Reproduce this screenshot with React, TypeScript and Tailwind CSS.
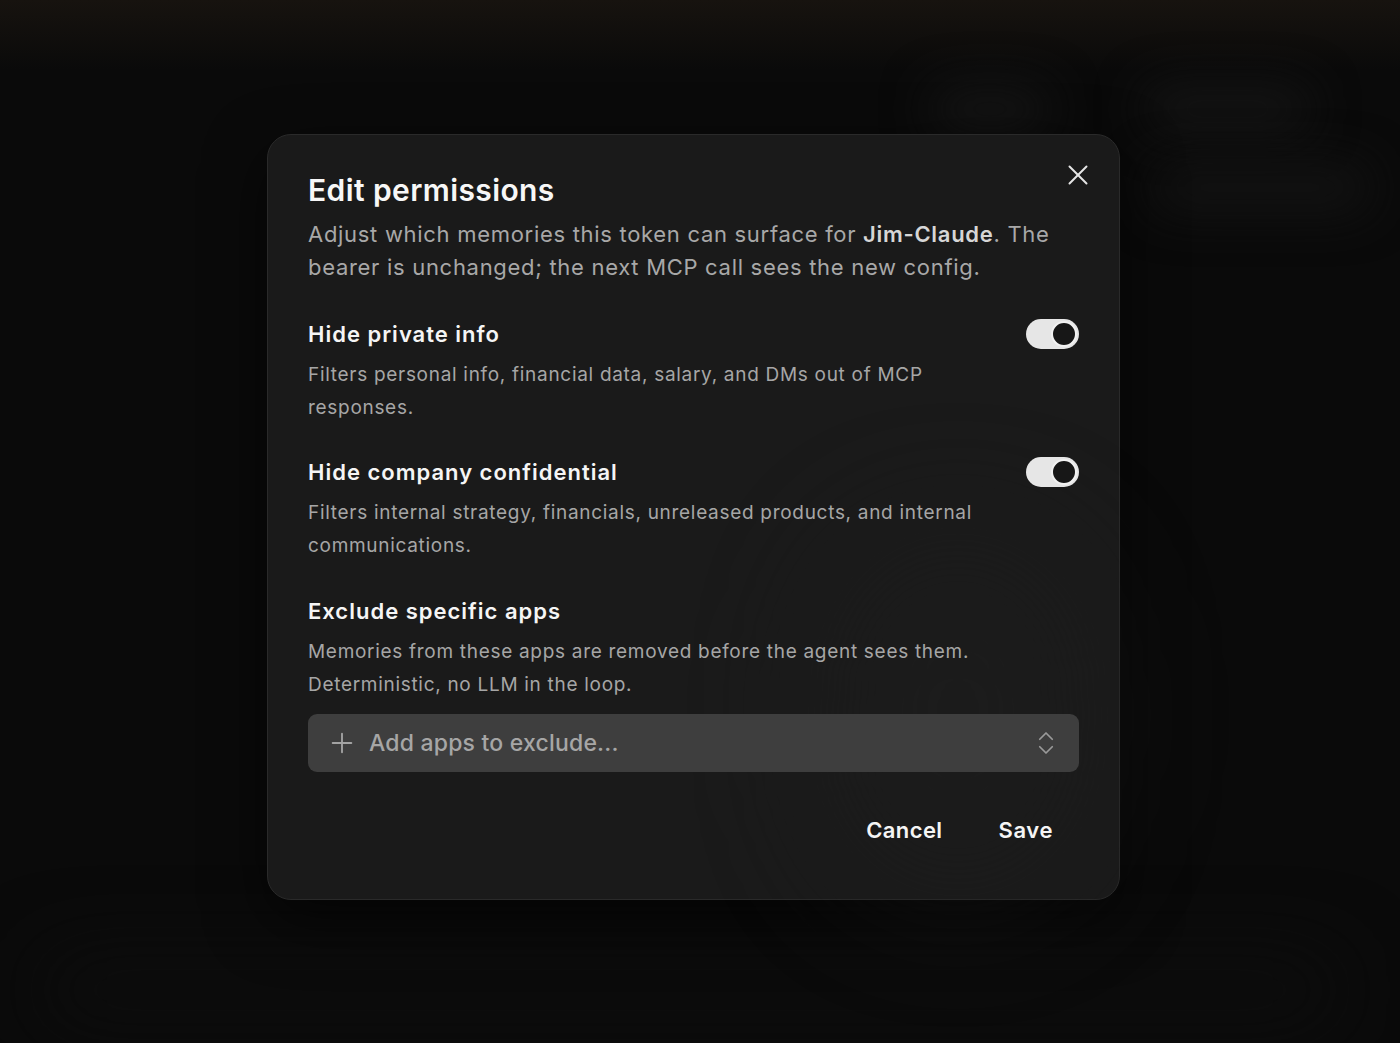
import { useState } from "react";
import { ChevronsUpDown, Plus, X } from "lucide-react";

function Toggle({ on, onChange }: { on: boolean; onChange: () => void }) {
  return (
    <button
      type="button"
      onClick={onChange}
      className={`flex h-[30px] w-[53px] shrink-0 items-center rounded-full p-[2px] ${
        on ? "justify-end bg-[#e6e6e6]" : "justify-start bg-[#3a3a3a]"
      }`}
    >
      <span className="h-[26px] w-[26px] rounded-full border-2 border-[#f2f2f2] bg-[#171717]" />
    </button>
  );
}

function Section({
  title,
  description,
  on,
  onChange,
}: {
  title: string;
  description: string;
  on?: boolean;
  onChange?: () => void;
}) {
  return (
    <div>
      <div className="flex items-center justify-between">
        <h3 className="text-[22px] leading-[30px] font-semibold tracking-[1px] text-[#f5f5f5]">{title}</h3>
        {onChange && <Toggle on={!!on} onChange={onChange} />}
      </div>
      <p className="mt-[9px] max-w-[690px] text-[19px] leading-[33px] tracking-[0.7px] text-[#a6a6a6]">
        {description}
      </p>
    </div>
  );
}

export default function App() {
  const [hidePrivate, setHidePrivate] = useState(true);
  const [hideCompany, setHideCompany] = useState(true);

  return (
    <div
      className="relative flex min-h-[1043px] justify-start overflow-hidden bg-[#0a0a0a] pl-[267px] pt-[134px]"
      style={{ fontFamily: "Inter, 'Noto Sans', sans-serif" }}
    >
      {/* dimmed backdrop content */}
      <div className="pointer-events-none absolute inset-x-0 top-0 h-[70px] bg-gradient-to-b from-[#17130f] to-transparent" />
      <div className="pointer-events-none absolute left-[930px] top-[88px] h-[42px] w-[120px] rounded-full bg-[#161616] blur-xl" />
      <div className="pointer-events-none absolute left-[1145px] top-[88px] h-[42px] w-[165px] rounded-full bg-[#151515] blur-xl" />
      <div className="pointer-events-none absolute left-[1150px] top-[165px] h-[45px] w-[220px] rounded-full bg-[#131313] blur-xl" />
      <div className="pointer-events-none absolute left-[40px] top-[960px] h-[60px] w-[1300px] rounded-full bg-[#0d0d0d] blur-2xl" />

      <div className="relative h-[766px] w-[853px] self-start rounded-[24px] border border-[#2a2a2a] bg-[#1a1a1a] px-[40px] pt-[37px] shadow-[0_20px_60px_rgba(0,0,0,0.6)]">
        <div className="pointer-events-none absolute left-[560px] top-[400px] h-[360px] w-[260px] rounded-full bg-[#1d1d1d] opacity-60 blur-3xl" />

        <button type="button" className="absolute left-[793px] top-[23px] text-[#e5e5e5]">
          <X className="h-[34px] w-[34px]" strokeWidth={1.4} />
        </button>

        <div className="relative">
          <h2 className="text-[30px] leading-[36px] font-semibold tracking-[0.4px] text-[#f7f7f7]">Edit permissions</h2>
          <p className="mt-[10px] text-[22px] leading-[33px] tracking-[0.7px] text-[#a8a8a8]">
            Adjust which memories this token can surface for{" "}
            <span className="font-semibold text-[#d6d6d6]">Jim-Claude</span>. The bearer is unchanged; the next MCP call
            sees the new config.
          </p>

          <div className="mt-[35px] flex flex-col gap-[33px]">
            <Section
              title="Hide private info"
              description="Filters personal info, financial data, salary, and DMs out of MCP responses."
              on={hidePrivate}
              onChange={() => setHidePrivate((v) => !v)}
            />
            <Section
              title="Hide company confidential"
              description="Filters internal strategy, financials, unreleased products, and internal communications."
              on={hideCompany}
              onChange={() => setHideCompany((v) => !v)}
            />
            <div className="pt-[1px]">
              <Section
                title="Exclude specific apps"
                description="Memories from these apps are removed before the agent sees them. Deterministic, no LLM in the loop."
              />
              <button
                type="button"
                className="mt-[13px] flex h-[58px] w-full items-center rounded-[9px] bg-[#3e3e3e] pl-[18px] pr-[18px] text-left"
              >
                <Plus className="h-[32px] w-[32px] text-[#a3a3a3]" strokeWidth={1.4} />
                <span className="ml-[11px] flex-1 text-[23px] font-medium tracking-[0.2px] text-[#a6a6a6]">
                  Add apps to exclude...
                </span>
                <ChevronsUpDown className="h-[30px] w-[30px] text-[#9a9a9a]" strokeWidth={1.4} />
              </button>
            </div>
          </div>

          <div className="mt-[32px] flex justify-end gap-[5px]">
            <button
              type="button"
              className="h-[52px] rounded-[10px] px-[25px] text-[22px] font-semibold tracking-[0.4px] text-[#f5f5f5]"
            >
              Cancel
            </button>
            <button
              type="button"
              className="h-[52px] rounded-[10px] px-[26px] text-[22px] font-semibold tracking-[0.6px] text-[#f5f5f5]"
            >
              Save
            </button>
          </div>
        </div>
      </div>
    </div>
  );
}
